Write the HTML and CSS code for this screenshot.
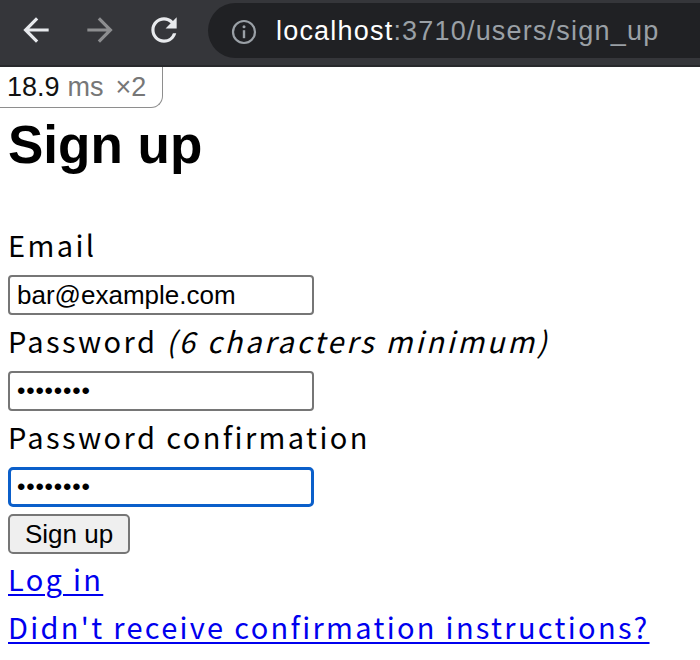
FILE: index.html
```html
<!DOCTYPE html>
<html>
<head>
<meta charset="utf-8">
<link rel="stylesheet" href="styles.css">
</head>
<body>
<div class="toolbar">
  <div class="navs">
    <svg class="nav" width="38" height="38" viewBox="0 0 24 24"><path d="M20 11H7.83l5.59-5.59L12 4l-8 8 8 8 1.41-1.41L7.83 13H20v-2z" fill="#e8eaed"/></svg>
    <svg class="nav" width="38" height="38" viewBox="0 0 24 24"><path d="M4 11h12.17l-5.59-5.59L12 4l8 8-8 8-1.41-1.41L16.17 13H4v-2z" fill="#8d8e90"/></svg>
    <svg class="nav" width="38" height="38" viewBox="0 0 24 24"><path d="M17.65 6.35A7.958 7.958 0 0 0 12 4c-4.42 0-7.99 3.58-7.99 8s3.57 8 7.99 8c3.73 0 6.84-2.55 7.73-6h-2.08A5.99 5.99 0 0 1 12 18c-3.31 0-6-2.69-6-6s2.69-6 6-6c1.66 0 3.14.69 4.22 1.78L13 11h7V4l-2.35 2.35z" fill="#e8eaed"/></svg>
  </div>
  <div class="omnibox">
    <svg class="info" width="26" height="26" viewBox="0 0 26 26"><circle cx="13" cy="13" r="11" fill="none" stroke="#9aa0a6" stroke-width="2.2"/><rect x="11.8" y="11.2" width="2.4" height="8" fill="#9aa0a6"/><circle cx="13" cy="7.8" r="1.5" fill="#9aa0a6"/></svg>
    <span class="url"><span class="host">localhost</span><span class="rest">:3710/users/sign_up</span></span>
  </div>
</div>
<div class="page">
  <div class="profiler"><span class="ms-num">18.9</span><span class="ms-unit">ms</span><span class="ms-count">×2</span></div>
  <h1 class="title">Sign up</h1>
  <form class="form">
    <div class="field">
      <label class="label">Email</label>
      <input class="input" type="text" value="bar@example.com">
    </div>
    <div class="field">
      <label class="label">Password <em class="hint">(6 characters minimum)</em></label>
      <input class="input" type="password" value="password">
    </div>
    <div class="field">
      <label class="label">Password confirmation</label>
      <input class="input focused" type="password" value="password">
    </div>
    <div class="actions">
      <button class="btn" type="button">Sign up</button>
    </div>
  </form>
  <div class="links">
    <a class="link" href="#">Log in</a>
    <a class="link" href="#">Didn't receive confirmation instructions?</a>
  </div>
</div>
</body>
</html>
```
FILE: styles.css
```css
html, body {
  margin: 0;
  padding: 0;
  background: #fff;
}
body {
  width: 700px;
  height: 660px;
  overflow: hidden;
}
.toolbar {
  height: 65px;
  background: #35363a;
  border-bottom: 2px solid #28292c;
  display: flex;
  align-items: center;
  position: relative;
  overflow: hidden;
}
.navs {
  display: flex;
  align-items: center;
  gap: 26px;
  padding-left: 17px;
  margin-top: -6px;
}
.nav {
  display: block;
}
.omnibox {
  position: absolute;
  left: 208px;
  top: 3px;
  width: 540px;
  height: 55px;
  border-radius: 28px;
  background: #202124;
  display: flex;
  align-items: center;
}
.info {
  margin-left: 23px;
  margin-top: 2px;
}
.url {
  margin-left: 19px;
  font-family: "Liberation Sans", Arial, sans-serif;
  font-size: 27px;
  letter-spacing: 1.2px;
  margin-top: 2px;
  white-space: nowrap;
}
.host { color: #fff; }
.rest { color: #9aa0a6; }

.page {
  position: relative;
  padding: 46px 8px 0;
}
.profiler {
  position: absolute;
  left: 0;
  top: 0;
  height: 40px;
  padding: 0 16px 0 7px;
  border-right: 1.5px solid #8e8e8e;
  border-bottom: 1.5px solid #8e8e8e;
  border-bottom-right-radius: 12px;
  background: #fff;
  font-family: "Liberation Sans", Arial, sans-serif;
  font-size: 27px;
  line-height: 40px;
  white-space: nowrap;
  display: flex;
  align-items: baseline;
}
.ms-num { color: #111; }
.ms-unit { color: #777; margin-left: 8px; }
.ms-count { color: #777; margin-left: 12px; }

.title {
  margin: 0;
  font-family: "Liberation Sans", Arial, sans-serif;
  font-weight: bold;
  font-size: 53px;
  line-height: 64px;
  color: #000;
}
.form {
  margin-top: 49px;
}
.label {
  display: block;
  font-family: "Noto Sans CJK JP", "Noto Sans", sans-serif;
  font-size: 29px;
  line-height: 36px;
  letter-spacing: 2.4px;
  color: #000;
}
.hint {
  font-style: italic;
  letter-spacing: 2.8px;
}
.input {
  display: block;
  box-sizing: border-box;
  width: 306px;
  height: 40px;
  margin: 13px 0 7px;
  padding: 0 7px;
  border: 2px solid #767676;
  border-radius: 4px;
  font-family: "Liberation Sans", Arial, sans-serif;
  font-size: 26px;
  color: #000;
  background: #fff;
  outline: none;
}
.input[type="password"] {
  font-size: 24px;
  letter-spacing: 0.8px;
}
.focused {
  border: 3px solid #0b5fca;
  border-radius: 5px;
  padding: 0 6px;
}
.actions {
  margin-top: 1px;
}
.btn {
  display: block;
  box-sizing: border-box;
  width: 122px;
  height: 40px;
  padding: 0;
  border: 2px solid #767676;
  border-radius: 5px;
  background: #efefef;
  font-family: "Liberation Sans", Arial, sans-serif;
  font-size: 26px;
  color: #000;
}
.links {
  display: flex;
  flex-direction: column;
  align-items: flex-start;
}
.link {
  font-family: "Noto Sans CJK JP", "Noto Sans", sans-serif;
  font-size: 29px;
  line-height: 48px;
  letter-spacing: 2.3px;
  color: #0000ee;
  text-decoration: underline;
  text-underline-offset: 3px;
  text-decoration-thickness: 2px;
}
```
